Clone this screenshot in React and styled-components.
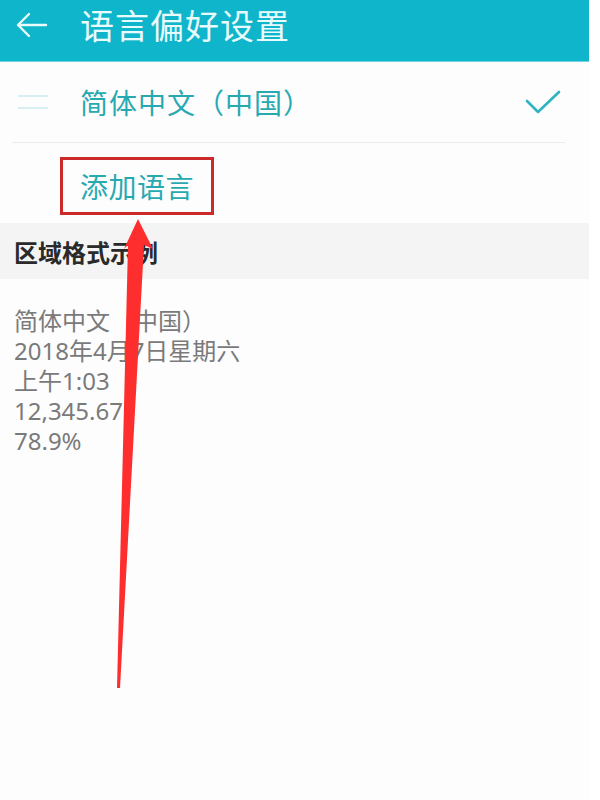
import React from "react";
import styled, { createGlobalStyle } from "styled-components";

const Global = createGlobalStyle`
  html, body { margin: 0; padding: 0; background: #ffffff; }
  body { font-family: "Noto Sans CJK SC", "Noto Sans", sans-serif; }
`;

const Screen = styled.div`
  position: relative;
  width: 589px;
  height: 800px;
  background: #fdfdfd;
  overflow: hidden;
`;

const Header = styled.header`
  height: 62px;
  box-sizing: border-box;
  background: #0fb5ca;
  display: flex;
  align-items: flex-start;
  padding: 5px 0 0 16px;
  border-bottom: 1px solid #6fd3df;
`;

const BackButton = styled.div`
  width: 34px;
  height: 40px;
  display: flex;
  align-items: center;
  margin-right: 30px;
`;

const Title = styled.h1`
  margin: 0;
  font-size: 34px;
  line-height: 40px;
  font-weight: 400;
  color: #e8fbfd;
  letter-spacing: 1px;
`;

const LangRow = styled.div`
  height: 80px;
  display: flex;
  align-items: center;
  padding: 0 28px 0 18px;
`;

const Handle = styled.div`
  width: 30px;
  height: 10px;
  border-top: 2px solid #d7eff2;
  border-bottom: 2px solid #d7eff2;
  margin-right: 32px;
`;

const LangName = styled.span`
  flex: 1;
  font-size: 28px;
  color: #27a9b2;
  letter-spacing: 1px;
`;

const Divider = styled.div`
  height: 1px;
  background: #ececec;
  margin: 0 24px 0 12px;
`;

const AddRow = styled.div`
  padding: 14px 0 8px 60px;
`;

const AddBox = styled.div`
  width: 154px;
  height: 58px;
  box-sizing: border-box;
  border: 3px solid #cc2a2a;
  display: flex;
  align-items: center;
  padding-left: 17px;
  font-size: 28px;
  color: #27a9b2;
  letter-spacing: 0.5px;
`;

const SectionHeader = styled.div`
  height: 56px;
  background: #f4f4f4;
  display: flex;
  align-items: center;
  padding-left: 14px;
  font-size: 24px;
  font-weight: 700;
  color: #2a2a2a;
`;

const Samples = styled.div`
  padding: 27px 0 0 14px;
  display: flex;
  flex-direction: column;
`;

const SampleLine = styled.div`
  font-family: "Noto Sans", "Noto Sans CJK SC", sans-serif;
  font-size: 24px;
  line-height: 30px;
  color: #7a7a7a;
`;

const ArrowOverlay = styled.svg`
  position: absolute;
  left: 0;
  top: 0;
  pointer-events: none;
`;

export default function App() {
  const samples = [
    "简体中文（中国）",
    "2018年4月7日星期六",
    "上午1:03",
    "12,345.67",
    "78.9%",
  ];
  return (
    <>
      <Global />
      <Screen>
        <Header>
          <BackButton>
            <svg width="32" height="26" viewBox="0 0 32 26" fill="none" stroke="#e8fbfd" strokeWidth="2.4" strokeLinecap="round" strokeLinejoin="round">
              <path d="M30 13H3" />
              <path d="M13 2L2 13l11 11" />
            </svg>
          </BackButton>
          <Title>语言偏好设置</Title>
        </Header>
        <LangRow>
          <Handle />
          <LangName>简体中文（中国）</LangName>
          <svg width="36" height="24" viewBox="0 0 36 24" fill="none" stroke="#2db3c2" strokeWidth="2.6" strokeLinecap="round" strokeLinejoin="round">
            <path d="M2 11l11 11L34 2" />
          </svg>
        </LangRow>
        <Divider />
        <AddRow>
          <AddBox>添加语言</AddBox>
        </AddRow>
        <SectionHeader>区域格式示例</SectionHeader>
        <Samples>
          {samples.map((s) => (
            <SampleLine key={s}>{s}</SampleLine>
          ))}
        </Samples>
        <ArrowOverlay width="589" height="800" viewBox="0 0 589 800">
          <polygon
            points="138,219 153,249 144,245 120,688 117,688 128,245 124,249"
            fill="#ff2e2e"
          />
        </ArrowOverlay>
      </Screen>
    </>
  );
}
